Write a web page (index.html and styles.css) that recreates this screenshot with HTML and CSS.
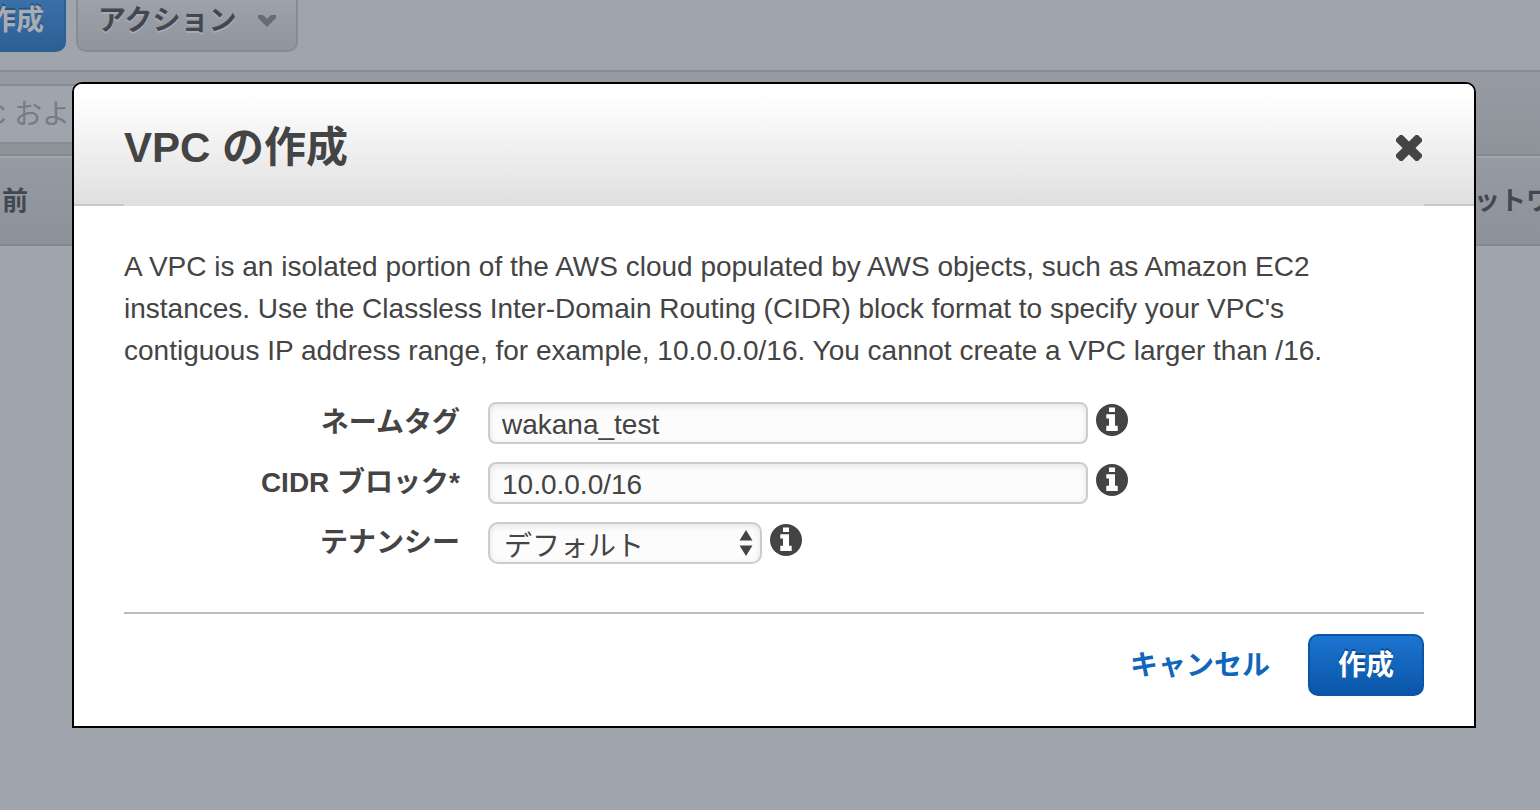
FILE: index.html
```html
<!DOCTYPE html>
<html lang="ja">
<head>
<meta charset="utf-8">
<title>VPC の作成</title>
<link rel="stylesheet" href="styles.css">
</head>
<body>
<svg class="sprite" aria-hidden="true">
  <symbol id="info" viewBox="0 0 32 32">
    <circle cx="16" cy="16" r="16" fill="#444"/>
    <path fill="#fff" d="M13 3.500h6V8h-6zM10.300 10.300H19v11.500h2.700V27H10.300v-5.200H13V14.500h-2.700z"/>
  </symbol>
</svg>
<div class="console">
  <div class="toolbar">
    <button class="tool tool-primary" type="button">作成</button>
    <button class="tool" type="button">アクション
      <svg class="caret" width="18" height="12" viewBox="0 0 18 12" aria-hidden="true"><path fill="#666b74" d="M0 0h5l4 4 4-4h5v3L9 12 0 3z"/></svg>
    </button>
  </div>
  <div class="filter">
    <input class="search" type="text" placeholder="C および" aria-label="検索">
  </div>
  <div class="columns"><span>前</span><span>ットワ</span></div>
</div>
<div class="overlay">
  <section class="dialog" role="dialog" aria-modal="true" aria-labelledby="title">
    <header class="dialog-head">
      <h1 class="title" id="title">VPC の作成</h1>
      <button class="close" type="button" aria-label="閉じる">
        <svg width="26" height="26" viewBox="0 0 26 26" aria-hidden="true"><g fill="#444" transform="rotate(45 13 13)"><rect x="-2.500" y="8.500" width="31" height="9" rx="2"/><rect x="8.500" y="-2.500" width="9" height="31" rx="2"/></g></svg>
      </button>
    </header>
    <form class="dialog-body">
      <p class="intro">A VPC is an isolated portion of the AWS cloud populated by AWS objects, such as Amazon EC2 instances. Use the Classless Inter-Domain Routing (CIDR) block format to specify your VPC's contiguous IP address range, for example, 10.0.0.0/16. You cannot create a VPC larger than /16.</p>
      <div class="fields">
        <div class="field">
          <label class="label" for="name">ネームタグ</label>
          <input class="control" id="name" type="text" value="wakana_test">
          <svg class="info" aria-hidden="true"><use href="#info"/></svg>
        </div>
        <div class="field">
          <label class="label" for="cidr">CIDR ブロック*</label>
          <input class="control" id="cidr" type="text" value="10.0.0.0/16">
          <svg class="info" aria-hidden="true"><use href="#info"/></svg>
        </div>
        <div class="field">
          <label class="label" for="tenancy">テナンシー</label>
          <span class="picker">
            <select class="control select" id="tenancy"><option>デフォルト</option></select>
            <svg class="arrows" width="14" height="26" viewBox="0 0 14 26" aria-hidden="true"><path fill="#444" d="M7 0l6.500 10.500H.5zM7 26L.5 15.500h13z"/></svg>
          </span>
          <svg class="info" aria-hidden="true"><use href="#info"/></svg>
        </div>
      </div>
      <div class="actions">
        <a class="cancel" href="#">キャンセル</a>
        <button class="submit" type="submit">作成</button>
      </div>
    </form>
  </section>
</div>
</body>
</html>
```
FILE: styles.css
```css
* { box-sizing: border-box; }
body {
  margin: 0;
  min-height: 100vh;
  overflow: hidden;
  background: #a0a4ac;
  color: #444;
  font: 28px/42px "Liberation Sans", "Noto Sans CJK JP", sans-serif;
}
button, input, select { font: inherit; color: inherit; }
.sprite { position: absolute; width: 0; height: 0; }

.toolbar {
  display: flex;
  gap: 10px;
  margin: -12px 0 0 -34px;
  padding-bottom: 18px;
  border-bottom: 2px solid #878b92;
}
.tool {
  display: flex;
  align-items: center;
  height: 64px;
  padding: 2px 20px 0;
  border: 2px solid #878b92;
  border-radius: 10px;
  background: linear-gradient(#a0a4ac, #90949c);
  color: #434850;
  font-weight: bold;
  text-shadow: 0 2px 0 #a8acb4;
}
.tool-primary {
  border-color: #2c5f96;
  background: linear-gradient(#3c74ac, #2e5f94);
  color: #a8acb3;
  text-shadow: 0 -2px 0 #295580;
}
.caret { margin-left: 21px; }
.filter {
  padding: 12px 0 10px;
  border-bottom: 2px solid #868a91;
  background: linear-gradient(#979ca4, #8e9299);
}
.search {
  display: block;
  width: 400px;
  height: 60px;
  margin-left: -36px;
  padding: 2px 20px 0;
  border: 2px solid #878b92;
  background: #a0a4ac;
}
.search::placeholder { color: #777b83; opacity: 1; }
.columns {
  display: flex;
  justify-content: space-between;
  height: 90px;
  padding: 22px 0 0 2px;
  border-top: 2px solid #a0a4ac;
  border-bottom: 2px solid #83878e;
  background: linear-gradient(#969ba3, #8d9199);
  color: #434850;
  font-size: 26px;
  font-weight: bold;
}
.columns span:last-child { width: 66px; white-space: nowrap; }

.overlay { position: absolute; inset: 0; padding: 82px 64px 0 72px; }
.dialog {
  border: 2px solid #000;
  border-radius: 10px 10px 0 0;
  background: #fff;
  overflow: hidden;
}
.dialog-head {
  display: flex;
  align-items: center;
  justify-content: space-between;
  padding: 38px 50px 32px;
  background:
    linear-gradient(#c8c8c8, #c8c8c8) left bottom / 50px 2px no-repeat,
    linear-gradient(#c8c8c8, #c8c8c8) right bottom / 50px 2px no-repeat,
    linear-gradient(#fff 10%, #dfdfdf);
}
.title { margin: 0; font-size: 42px; line-height: 52px; }
.close { display: flex; padding: 0; margin-right: 2px; border: 0; background: none; }
.dialog-body { padding: 40px 50px 30px; }
.intro { margin: 0 0 30px; }
.fields { display: grid; gap: 18px; }
.field { display: flex; align-items: flex-start; }
.label {
  width: 336px;
  margin-right: 28px;
  text-align: right;
  font-weight: bold;
}
.control {
  display: block;
  width: 600px;
  height: 42px;
  padding: 3px 12px 0;
  border: 2px solid #ccc;
  border-radius: 8px;
  background: #fcfcfc;
  box-shadow: inset 0 2px 6px #e4e4e4;
}
.picker { position: relative; }
.select { width: 274px; padding: 2px 14px 0; border-radius: 10px; appearance: none; }
.arrows { position: absolute; right: 9px; top: 8px; pointer-events: none; }
.info { width: 32px; height: 32px; margin: 2px 0 0 8px; }
.actions {
  display: flex;
  justify-content: flex-end;
  align-items: center;
  gap: 38px;
  margin-top: 48px;
  padding-top: 20px;
  border-top: 2px solid #bbb;
}
.cancel { padding-top: 2px; color: #1166bb; font-weight: bold; text-decoration: none; }
.submit {
  width: 116px;
  height: 62px;
  padding: 2px 0 0;
  border: 2px solid #0a55a8;
  border-radius: 10px;
  background: linear-gradient(#1c74d0, #0b56a8);
  color: #fff;
  font-weight: bold;
  text-shadow: 0 -2px 0 #0b4a90;
}
```
